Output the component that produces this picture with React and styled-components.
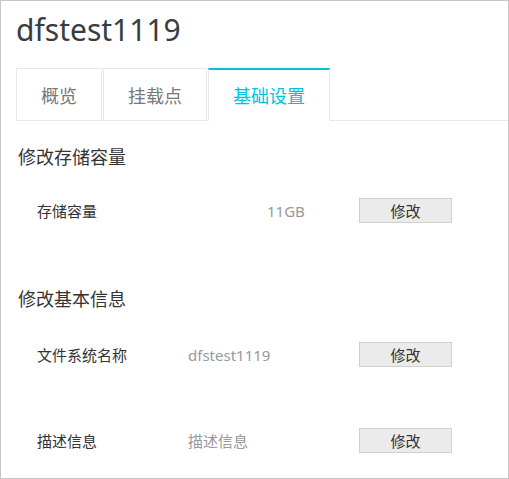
import React, { useState } from "react";
import styled, { createGlobalStyle } from "styled-components";

const GlobalStyle = createGlobalStyle`
  html, body {
    margin: 0;
    padding: 0;
    background: #ffffff;
  }
  body {
    font-family: "Noto Sans", "Noto Sans CJK SC", sans-serif;
  }
`;

const Page = styled.div`
  box-sizing: border-box;
  width: 509px;
  height: 479px;
  border: 1px solid #c6c6c6;
  overflow: hidden;
  color: #333333;
`;

const Title = styled.h1`
  margin: 9px 0 0 15px;
  font-size: 30px;
  line-height: 40px;
  font-weight: 400;
  color: #373d41;
`;

const TabBar = styled.div`
  display: flex;
  margin: 18px 0 0 15px;
  border-bottom: 1px solid #e6e6e6;
`;

const Tab = styled.button`
  box-sizing: border-box;
  height: 53px;
  margin: 0 1px -1px 0;
  padding: 0 24px;
  background: #ffffff;
  border: 1px solid #e8e8e8;
  border-top: ${(p) => (p.$active ? "2px solid #00c1de" : "1px solid #e8e8e8")};
  border-bottom-color: ${(p) => (p.$active ? "#ffffff" : "#e8e8e8")};
  color: ${(p) => (p.$active ? "#00c1de" : "#777777")};
  font-family: "Noto Sans CJK SC", sans-serif;
  font-size: 18px;
  cursor: pointer;
`;

const Section = styled.section`
  padding-left: 17px;
`;

const SectionTitle = styled.h2`
  margin: ${(p) => p.$top}px 0 0 0;
  font-size: 18px;
  line-height: 24px;
  font-weight: 400;
  color: #333333;
  font-family: "Noto Sans CJK SC", sans-serif;
`;

const Row = styled.div`
  display: grid;
  grid-template-columns: ${(p) => p.$label}px ${(p) => 322 - p.$label}px 93px;
  align-items: center;
  margin-top: ${(p) => p.$top}px;
  padding-left: 19px;
  font-size: 15px;
  height: 25px;
`;

const Label = styled.span`
  color: #333333;
  font-family: "Noto Sans CJK SC", sans-serif;
`;

const Value = styled.span`
  color: #999999;
`;

const EditButton = styled.button`
  box-sizing: border-box;
  width: 93px;
  height: 25px;
  padding: 0;
  background: #ebebeb;
  border: 1px solid #d0d0d0;
  color: #333333;
  font-family: "Noto Sans CJK SC", sans-serif;
  font-size: 15px;
  cursor: pointer;
`;

const tabs = ["概览", "挂载点", "基础设置"];

export default function App() {
  const [active, setActive] = useState(2);

  return (
    <>
      <GlobalStyle />
      <Page>
        <Title>dfstest1119</Title>
        <TabBar>
          {tabs.map((t, i) => (
            <Tab key={t} $active={active === i} onClick={() => setActive(i)}>
              {t}
            </Tab>
          ))}
        </TabBar>

        <Section>
          <SectionTitle $top={23}>修改存储容量</SectionTitle>
          <Row $label={230} $top={30}>
            <Label>存储容量</Label>
            <Value>11GB</Value>
            <EditButton>修改</EditButton>
          </Row>
        </Section>

        <Section>
          <SectionTitle $top={63}>修改基本信息</SectionTitle>
          <Row $label={151} $top={32}>
            <Label>文件系统名称</Label>
            <Value>dfstest1119</Value>
            <EditButton>修改</EditButton>
          </Row>
          <Row $label={151} $top={61}>
            <Label>描述信息</Label>
            <Value>描述信息</Value>
            <EditButton>修改</EditButton>
          </Row>
        </Section>
      </Page>
    </>
  );
}
